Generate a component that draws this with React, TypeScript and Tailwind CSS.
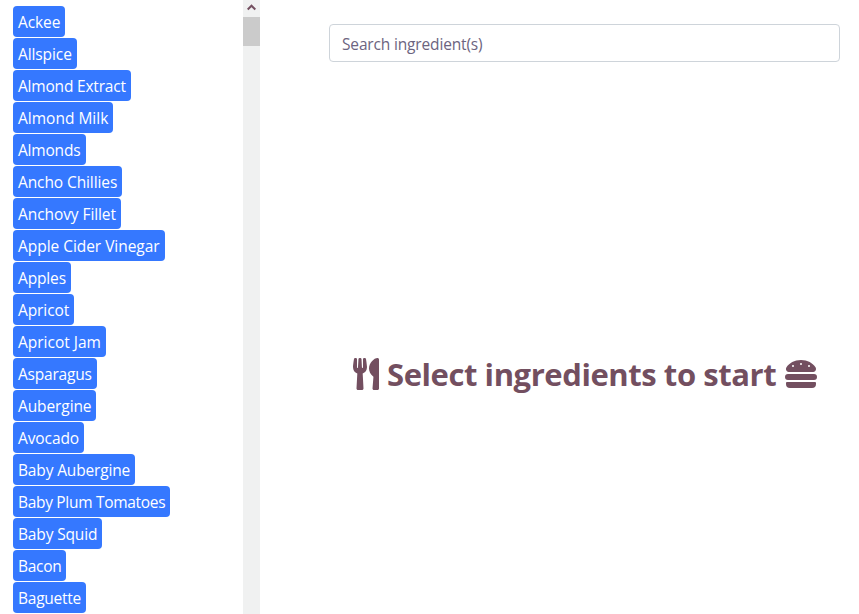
import { FaHamburger, FaUtensils } from "react-icons/fa";

const ingredients: [name: string, width: number, tracking: number][] = [
  ["Ackee", 52, -0.1], ["Allspice", 64, -0.1], ["Almond Extract", 118, -0.2], ["Almond Milk", 100, 0],
  ["Almonds", 73, -0.2], ["Ancho Chillies", 109, -0.1], ["Anchovy Fillet", 108, -0.08],
  ["Apple Cider Vinegar", 152, -0.04], ["Apples", 58, -0.15], ["Apricot", 61, -0.1], ["Apricot Jam", 93, 0],
  ["Asparagus", 84, -0.2], ["Aubergine", 83, -0.1], ["Avocado", 71, -0.1], ["Baby Aubergine", 122, -0.15],
  ["Baby Plum Tomatoes", 157, -0.31], ["Baby Squid", 89, -0.15], ["Bacon", 53, -0.3], ["Baguette", 73, -0.25],
];

export default function App() {
  return (
    <div className="flex h-[614px] w-[859px] overflow-hidden bg-white font-['Open_Sans','Noto_Sans',sans-serif] text-[#734f60]">
      <aside className="flex w-[243px] shrink-0 flex-col items-start gap-px pt-1.5 pl-[13px]">
        {ingredients.map(([name, width, tracking]) => (
          <button
            key={name}
            className="flex h-[31px] shrink-0 items-center rounded-[4px] bg-[#3578ff] pt-px pl-[5px] text-left text-[15.5px] leading-6 whitespace-nowrap text-white"
            style={{ width, letterSpacing: tracking }}
          >
            {name}
          </button>
        ))}
      </aside>
      <div className="flex w-[17px] shrink-0 flex-col bg-[#f0f1f1]">
        <div className="flex h-[17px] items-center justify-center pb-0.5">
          <svg width="9" height="7" viewBox="0 0 9 7" fill="none" stroke="#734f60" strokeWidth="2">
            <path d="M0.7 5.5 L4.5 1.7 L8.3 5.5" />
          </svg>
        </div>
        <div className="h-[29px] bg-[#cbcbcb]" />
      </div>
      <main className="flex flex-1 flex-col pt-6 pr-[19px] pl-[69px]">
        <input
          className="h-[38px] w-full rounded-[4px] border border-[#ced4da] px-3 pt-0.5 text-[15.5px] tracking-[-0.16px] outline-none placeholder:text-[#6c6480]"
          placeholder="Search ingredient(s)"
        />
        <h1 className="mt-[292px] ml-6 flex h-10 items-center text-[31px] leading-10 font-bold whitespace-nowrap">
          <FaUtensils className="h-8 w-[26px] shrink-0" />
          <span className="ml-2 w-[398px] shrink-0 tracking-[-0.43px]">Select ingredients to start</span>
          <FaHamburger className="size-8 shrink-0" />
        </h1>
      </main>
    </div>
  );
}
